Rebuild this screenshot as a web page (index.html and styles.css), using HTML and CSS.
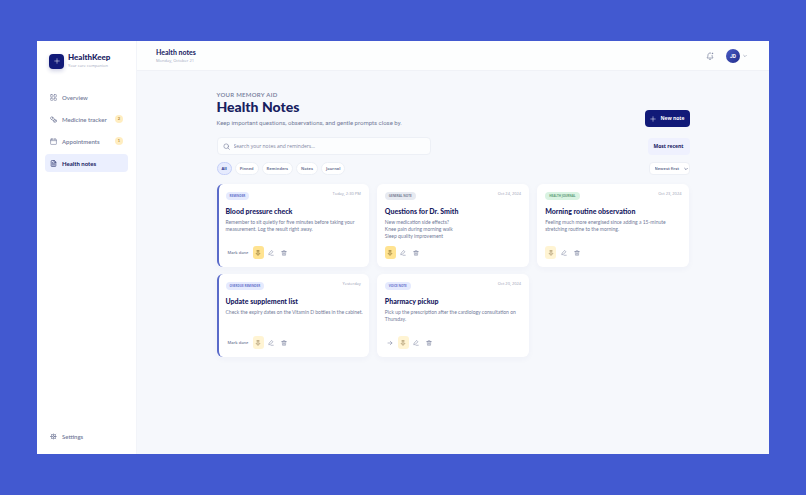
FILE: index.html
```html
<!DOCTYPE html>
<html lang="en">
<head>
  <meta charset="UTF-8" />
  <meta name="viewport" content="width=device-width, initial-scale=1" />
  <title>HealthKeep - Health notes</title>
  <link rel="stylesheet" href="styles.css">
</head>
<body>
  <!-- Shared icons -->
  <svg width="0" height="0" class="sprite" aria-hidden="true">
    <symbol id="i-plus" viewBox="0 0 24 24"><path d="M12 3v18M3 12h18"/></symbol>
    <symbol id="i-grid" viewBox="0 0 24 24"><rect x="2" y="2" width="8" height="8" rx="2"/><rect x="14" y="2" width="8" height="8" rx="2"/><rect x="2" y="14" width="8" height="8" rx="2"/><rect x="14" y="14" width="8" height="8" rx="2"/></symbol>
    <symbol id="i-pills" viewBox="0 0 24 24"><rect x="1" y="5" width="15" height="8" rx="4" transform="rotate(35 8 9)"/><path d="M10 6l-4 6"/><circle cx="17" cy="17" r="5"/><path d="M14 20l6-6"/></symbol>
    <symbol id="i-calendar" viewBox="0 0 24 24"><rect x="2" y="4" width="20" height="18" rx="2"/><path d="M7 1v5M17 1v5M2 9h20"/></symbol>
    <symbol id="i-file" viewBox="0 0 24 24"><path d="M14 2H6a2 2 0 0 0-2 2v16a2 2 0 0 0 2 2h12a2 2 0 0 0 2-2V8zM14 2v6h6M8 9h2M8 13h8M8 17h8"/></symbol>
    <symbol id="i-gear" viewBox="0 0 24 24"><circle cx="12" cy="12" r="8"/><circle cx="12" cy="12" r="3"/><path d="M12 4v5M12 15v5M4 12H1M9 12H4M15 12h5M6 6L4 4M18 6l2-2M6 18l-2 2M18 18l2 2"/></symbol>
    <symbol id="i-bell" viewBox="0 0 24 24"><path d="M14 3A6 6 0 0 0 6 9c0 6-3 8-3 9h18c0-1-3-3-3-8M10 22h4"/><circle cx="19" cy="4" r="1"/></symbol>
    <symbol id="i-down" viewBox="0 0 24 24"><path d="M4 8l8 8 8-8"/></symbol>
    <symbol id="i-search" viewBox="0 0 24 24"><circle cx="11" cy="11" r="8"/><path d="M17 17l5 5"/></symbol>
    <symbol id="i-pin" viewBox="0 0 24 24"><path d="M8 3h8M9 3v7l-4 4v2h14v-2l-4-4V3M12 16v6"/></symbol>
    <symbol id="i-edit" viewBox="0 0 24 24"><path d="M12 21h9M16 3l4 4L8 18l-5 1 1-5z"/></symbol>
    <symbol id="i-trash" viewBox="0 0 24 24"><path d="M3 6h18M8 6V3h8v3M5 6l1 15h12l1-15M10 11v6M14 11v6"/></symbol>
    <symbol id="i-arrow" viewBox="0 0 24 24"><path d="M4 12h16M13 5l7 7-7 7"/></symbol>
  </svg>

  <div class="app">
    <aside class="sidebar">
      <div class="brand">
        <span class="brand-logo"><svg class="icon"><use href="#i-plus"/></svg></span>
        <div>
          <div class="brand-name">HealthKeep</div>
          <div class="brand-tag">Your care companion</div>
        </div>
      </div>

      <nav class="nav">
        <a href="#overview" class="nav-item"><svg class="icon"><use href="#i-grid"/></svg>Overview</a>
        <a href="#medicine" class="nav-item"><svg class="icon"><use href="#i-pills"/></svg>Medicine tracker<span class="count">2</span></a>
        <a href="#appointments" class="nav-item"><svg class="icon"><use href="#i-calendar"/></svg>Appointments<span class="count">1</span></a>
        <a href="#notes" class="nav-item active"><svg class="icon"><use href="#i-file"/></svg>Health notes</a>
        <a href="#settings" class="nav-item settings"><svg class="icon"><use href="#i-gear"/></svg>Settings</a>
      </nav>
    </aside>

    <div class="page">
      <header class="topbar">
        <div>
          <div class="topbar-title">Health notes</div>
          <div class="topbar-date">Monday, October 21</div>
        </div>
        <div class="topbar-right">
          <button class="bell" aria-label="Notifications"><svg class="icon"><use href="#i-bell"/></svg></button>
          <button class="account" aria-label="Account">
            <span class="avatar">JD</span>
            <svg class="icon"><use href="#i-down"/></svg>
          </button>
        </div>
      </header>

      <main class="content">
        <div class="page-head">
          <div>
            <div class="eyebrow">YOUR MEMORY AID</div>
            <h1>Health Notes</h1>
            <p>Keep important questions, observations, and gentle prompts close by.</p>
          </div>
          <button class="btn-new"><svg class="icon"><use href="#i-plus"/></svg>New note</button>
        </div>

        <div class="toolbar">
          <label class="search">
            <svg class="icon"><use href="#i-search"/></svg>
            <input type="text" aria-label="Search notes" placeholder="Search your notes and reminders..." />
          </label>
          <button class="btn-recent">Most recent</button>
        </div>

        <div class="toolbar filters-row">
          <div class="filters">
            <button class="pill active">All</button>
            <button class="pill">Pinned</button>
            <button class="pill">Reminders</button>
            <button class="pill">Notes</button>
            <button class="pill">Journal</button>
          </div>
          <div class="sort">
            <select aria-label="Sort notes">
              <option>Newest first</option>
              <option>Oldest first</option>
            </select>
            <svg class="icon"><use href="#i-down"/></svg>
          </div>
        </div>

        <div class="notes">
          <article class="note reminder">
            <div class="note-top"><span class="tag">REMINDER</span><time>Today, 2:30 PM</time></div>
            <h2>Blood pressure check</h2>
            <p>Remember to sit quietly for five minutes before taking your measurement. Log the result right away.</p>
            <div class="actions">
              <button class="done">Mark done</button>
              <button class="pin pinned" aria-label="Unpin"><svg class="icon"><use href="#i-pin"/></svg></button>
              <button aria-label="Edit"><svg class="icon"><use href="#i-edit"/></svg></button>
              <button aria-label="Delete"><svg class="icon"><use href="#i-trash"/></svg></button>
            </div>
          </article>

          <article class="note">
            <div class="note-top"><span class="tag grey">GENERAL NOTE</span><time>Oct 24, 2024</time></div>
            <h2>Questions for Dr. Smith</h2>
            <p>New medication side effects?<br>Knee pain during morning walk<br>Sleep quality improvement</p>
            <div class="actions">
              <button class="pin pinned" aria-label="Unpin"><svg class="icon"><use href="#i-pin"/></svg></button>
              <button aria-label="Edit"><svg class="icon"><use href="#i-edit"/></svg></button>
              <button aria-label="Delete"><svg class="icon"><use href="#i-trash"/></svg></button>
            </div>
          </article>

          <article class="note">
            <div class="note-top"><span class="tag green">HEALTH JOURNAL</span><time>Oct 23, 2024</time></div>
            <h2>Morning routine observation</h2>
            <p>Feeling much more energised since adding a 15-minute stretching routine to the morning.</p>
            <div class="actions">
              <button class="pin" aria-label="Pin"><svg class="icon"><use href="#i-pin"/></svg></button>
              <button aria-label="Edit"><svg class="icon"><use href="#i-edit"/></svg></button>
              <button aria-label="Delete"><svg class="icon"><use href="#i-trash"/></svg></button>
            </div>
          </article>

          <article class="note reminder">
            <div class="note-top"><span class="tag">OVERDUE REMINDER</span><time>Yesterday</time></div>
            <h2>Update supplement list</h2>
            <p>Check the expiry dates on the Vitamin D bottles in the cabinet.</p>
            <div class="actions">
              <button class="done">Mark done</button>
              <button class="pin" aria-label="Pin"><svg class="icon"><use href="#i-pin"/></svg></button>
              <button aria-label="Edit"><svg class="icon"><use href="#i-edit"/></svg></button>
              <button aria-label="Delete"><svg class="icon"><use href="#i-trash"/></svg></button>
            </div>
          </article>

          <article class="note">
            <div class="note-top"><span class="tag">VOICE NOTE</span><time>Oct 20, 2024</time></div>
            <h2>Pharmacy pickup</h2>
            <p>Pick up the prescription after the cardiology consultation on Thursday.</p>
            <div class="actions">
              <button aria-label="Open"><svg class="icon"><use href="#i-arrow"/></svg></button>
              <button class="pin" aria-label="Pin"><svg class="icon"><use href="#i-pin"/></svg></button>
              <button aria-label="Edit"><svg class="icon"><use href="#i-edit"/></svg></button>
              <button aria-label="Delete"><svg class="icon"><use href="#i-trash"/></svg></button>
            </div>
          </article>
        </div>
      </main>
    </div>
  </div>
</body>
</html>
```
FILE: styles.css
```css
* {
  box-sizing: border-box;
}

body {
  margin: 0;
  min-height: 100vh;
  padding: 41px 37px;
  display: flex;
  background: #4259d0;
  font-family: "Open Sans", sans-serif;
  font-size: 5px;
  line-height: 7px;
  color: #737b99;
}

h1, h2, p {
  margin: 0;
}

button, input, select {
  font: inherit;
  color: inherit;
  margin: 0;
  padding: 0;
  border: none;
  background: none;
}

button {
  cursor: pointer;
}

a {
  color: inherit;
  text-decoration: none;
}

.sprite {
  position: absolute;
}

.icon {
  width: 6px;
  height: 6px;
  flex: none;
  display: block;
  fill: none;
  stroke: currentColor;
  stroke-width: 2;
  stroke-linecap: round;
  stroke-linejoin: round;
}

.app {
  flex: 1;
  display: flex;
  background: #f6f8fc;
}

/* Sidebar */
.sidebar {
  width: 100px;
  flex: none;
  display: flex;
  flex-direction: column;
  padding: 12px 8px 9px;
  background: #fff;
  border-right: 1px solid #f2f4f9;
}

.brand {
  display: flex;
  align-items: center;
  gap: 4px;
  padding-left: 4px;
}

.brand-logo {
  width: 15px;
  height: 15px;
  display: grid;
  place-items: center;
  border-radius: 4px;
  background: #111a78;
  color: #fff;
  box-shadow: 0 2px 4px rgba(17, 26, 120, 0.2);
}

.brand-name {
  font-family: Lato, sans-serif;
  font-size: 8px;
  font-weight: 900;
  line-height: 9px;
  color: #17205f;
}

.brand-tag {
  font-size: 4px;
  color: #a3a9be;
}

.nav {
  flex: 1;
  display: flex;
  flex-direction: column;
  gap: 4px;
  padding-top: 19px;
}

.nav-item {
  display: flex;
  align-items: center;
  gap: 5px;
  height: 18px;
  padding: 0 5px;
  border-radius: 4px;
  font-family: Lato, sans-serif;
  font-size: 6px;
  font-weight: 600;
}

.nav-item .icon {
  width: 7px;
  height: 7px;
}

.nav-item.active {
  background: #ebeffe;
  color: #17205f;
  font-weight: 700;
}

.nav-item.settings {
  margin-top: auto;
}

.count {
  width: 8px;
  height: 8px;
  margin-left: auto;
  border-radius: 4px;
  background: #ffedc0;
  color: #a67a30;
  font-size: 4px;
  line-height: 8px;
  text-align: center;
}

/* Top bar */
.page {
  flex: 1;
  min-width: 0;
}

.topbar {
  display: flex;
  justify-content: space-between;
  align-items: center;
  height: 30px;
  padding: 0 22px 0 19px;
  background: #fdfefe;
  border-bottom: 1px solid #f0f2f7;
}

.topbar-title {
  font-family: Lato, sans-serif;
  font-size: 7px;
  font-weight: 700;
  line-height: 9px;
  color: #17205f;
}

.topbar-date {
  font-size: 4px;
  color: #a3a9be;
}

.topbar-right {
  display: flex;
  align-items: center;
  gap: 12px;
}

.bell .icon {
  width: 8px;
  height: 8px;
}

.account {
  display: flex;
  align-items: center;
  gap: 3px;
}

.account .icon {
  width: 4px;
  height: 4px;
  stroke-width: 3;
}

.avatar {
  width: 14px;
  height: 14px;
  border-radius: 50%;
  background: linear-gradient(135deg, #4a5cc5, #222e8c);
  color: #fff;
  font-family: Roboto, sans-serif;
  font-weight: 700;
  line-height: 14px;
}

/* Page content */
.content {
  max-width: 473px;
  margin: 0 auto;
  padding: 20px 0;
}

.page-head {
  display: flex;
  justify-content: space-between;
  align-items: flex-end;
}

.eyebrow {
  font-family: Lato, sans-serif;
  font-size: 6px;
  font-weight: 600;
  letter-spacing: 0.05em;
  line-height: 8px;
}

h1 {
  font-family: Lato, sans-serif;
  font-size: 14px;
  font-weight: 900;
  line-height: 16px;
  color: #17205f;
}

.page-head p {
  margin-top: 4px;
  font-family: Roboto, sans-serif;
  font-size: 6px;
  line-height: 8px;
}

.btn-new {
  display: flex;
  align-items: center;
  gap: 4px;
  height: 17px;
  padding: 0 5px;
  border-radius: 4px;
  background: #111a78;
  color: #fff;
  font-weight: 700;
}

.toolbar {
  display: flex;
  justify-content: space-between;
  align-items: center;
  margin-top: 10px;
}

.search {
  display: flex;
  align-items: center;
  gap: 4px;
  width: 214px;
  height: 18px;
  padding: 0 5px;
  border: 1px solid #edf0f6;
  border-radius: 4px;
  background: #fcfdfe;
}

.search .icon {
  width: 7px;
  height: 7px;
}

.search input {
  flex: 1;
  min-width: 0;
  outline: none;
}

.search input::placeholder {
  color: #7f869f;
}

.btn-recent {
  height: 17px;
  padding: 0 6px;
  border-radius: 4px;
  background: #eff1fe;
  color: #17205f;
  font-weight: 700;
}

.filters-row {
  margin-top: 7px;
}

.filters {
  display: flex;
  gap: 3px;
}

.pill {
  height: 13px;
  padding: 0 4px;
  border: 1px solid #ecf0f6;
  border-radius: 7px;
  background: #fff;
  font-size: 4px;
  font-weight: 700;
}

.pill.active {
  background: #e6ebfe;
  border-color: #c6d0f8;
  color: #27358c;
}

.sort {
  display: flex;
  align-items: center;
  width: 41px;
  height: 13px;
  padding: 0 1px 0 5px;
  border: 1px solid #edf0f6;
  border-radius: 4px;
  background: #fff;
}

.sort select {
  flex: 1;
  min-width: 0;
  appearance: none;
  font-size: 4px;
  font-weight: 700;
}

.sort .icon {
  width: 4px;
  height: 4px;
  stroke-width: 5;
}

/* Notes */
.notes {
  display: grid;
  grid-template-columns: repeat(3, 1fr);
  gap: 7px 8px;
  margin-top: 9px;
}

.note {
  display: flex;
  flex-direction: column;
  min-height: 83px;
  padding: 8px 3px 8px 8px;
  border-radius: 6px;
  background: #fff;
  box-shadow: 0 2px 6px rgba(40, 60, 130, 0.04);
}

.note.reminder {
  padding-left: 7px;
  border-left: 2px solid #5a6bc9;
}

.note-top {
  display: flex;
  justify-content: space-between;
  align-items: flex-start;
  padding-right: 5px;
}

.note time {
  font-size: 4px;
  line-height: 4px;
  color: #9ba1b5;
}

.tag {
  height: 8px;
  padding: 0 4px;
  border-radius: 4px;
  background: #e5eafe;
  color: #6574cb;
  font-size: 3px;
  font-weight: 700;
  line-height: 8px;
}

.tag.grey {
  background: #e7eaf1;
  color: #777e93;
}

.tag.green {
  background: #d9f3e2;
  color: #5e9b78;
}

.note h2 {
  margin: 6px 0 3px;
  font-family: Lato, sans-serif;
  font-size: 7px;
  font-weight: 900;
  line-height: 10px;
  color: #17205f;
}

.note p {
  font-family: Lato, sans-serif;
}

.actions {
  display: flex;
  gap: 2px;
  margin-top: auto;
}

.actions button {
  display: grid;
  place-items: center;
  width: 11px;
  height: 13px;
  border-radius: 3px;
}

.actions .done {
  width: 25px;
  font-size: 4px;
  font-weight: 600;
}

.actions .pin {
  background: #fff4d3;
  color: #8d7448;
}

.actions .pinned {
  background: #ffe391;
  color: #75591d;
}
```
